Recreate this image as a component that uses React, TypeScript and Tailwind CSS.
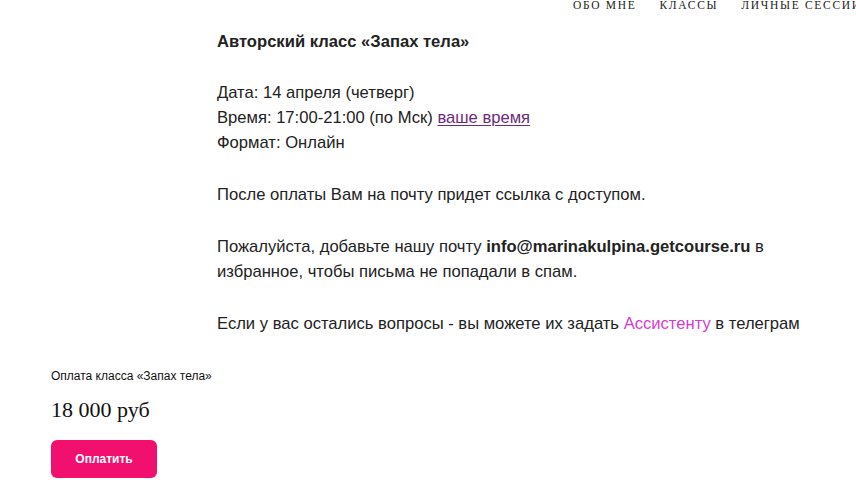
export default function App() {
  const sans = { fontFamily: '"Liberation Sans", Arial, sans-serif' };
  return (
    <div className="w-[856px] h-[489px] overflow-hidden bg-white text-[#222]" style={sans}>
      {/* top navigation, runs past the right edge */}
      <nav className="h-[12px] flex items-center whitespace-nowrap pl-[573px] gap-[23px] text-[11.5px] leading-none tracking-[1.7px] text-[#222] font-['Liberation_Serif',serif]">
        <span>ОБО МНЕ</span>
        <span>КЛАССЫ</span>
        <span>ЛИЧНЫЕ СЕССИИ</span>
      </nav>

      {/* class description */}
      <div className="ml-[217px] w-[594px] mt-[17px] flex flex-col gap-[27px] text-[16.6px] leading-[25px]">
        <p className="font-bold">Авторский класс «Запах тела»</p>
        <div className="-mt-[1px]">
          <p>Дата: 14 апреля (четверг)</p>
          <p>
            Время: 17:00-21:00 (по Мск){' '}
            <a href="#" className="text-[#6b2a7e] underline underline-offset-2">ваше время</a>
          </p>
          <p>Формат: Онлайн</p>
        </div>
        <p>После оплаты Вам на почту придет ссылка с доступом.</p>
        <p>
          Пожалуйста, добавьте нашу почту <b>info@marinakulpina.getcourse.ru</b> в избранное, чтобы письма не
          попадали в спам.
        </p>
        <p>
          Если у вас остались вопросы - вы можете их задать{' '}
          <a href="#" className="text-[#d43dcd]">Ассистенту</a> в телеграм
        </p>
      </div>

      {/* payment block */}
      <div className="ml-[51px] mt-[32px] flex flex-col items-start">
        <p className="text-[12px] leading-[16px] text-[#111]">Оплата класса «Запах тела»</p>
        <p className="mt-[13px] text-[22px] leading-[26px] text-[#111] font-['Liberation_Serif',serif]">18 000 руб</p>
        <button className="mt-[17px] w-[106px] h-[38px] rounded-[6px] bg-[#f2106f] text-white text-[12px] font-bold">
          Оплатить
        </button>
      </div>
    </div>
  );
}
